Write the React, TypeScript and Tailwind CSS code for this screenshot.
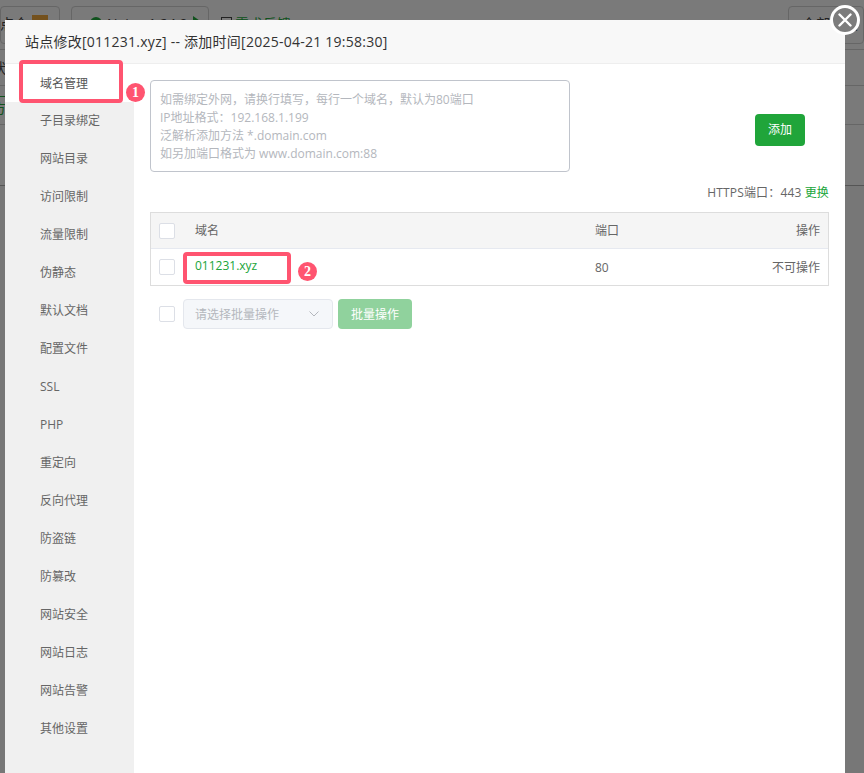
import React from "react";

const font = '"Open Sans", "Noto Sans CJK SC", sans-serif';
const menu = ["域名管理","子目录绑定","网站目录","访问限制","流量限制","伪静态","默认文档","配置文件","SSL","PHP","重定向","反向代理","防盗链","防篡改","网站安全","网站日志","网站告警","其他设置"];

function Check() {
  return <span className="block w-4 h-4 shrink-0 rounded-[2px] border border-[#dcdfe6] bg-white" />;
}

function Badge({ n }: { n: string }) {
  return (
    <span className="absolute w-[19px] h-[19px] rounded-full bg-[#ff5470] text-white text-[14px] font-bold flex items-center justify-center [font-family:'Liberation_Serif',serif]">
      {n}
    </span>
  );
}

function Background() {
  return (
    <div className="h-full bg-[#f4f4f4] text-[#444] text-[14px]">
      <div className="flex items-center h-[50px] border-b border-[#ccc] pt-[6px] pb-[6px]">
        <div className="flex items-center justify-end w-[60px] h-[38px] border border-[#ccc] rounded-[4px] pr-[11px] pb-[3px] gap-1 overflow-hidden shrink-0">
          <span className="whitespace-nowrap">站点合</span>
          <span className="w-4 h-4 bg-[#e8a33a] shrink-0" />
        </div>
        <div className="flex items-center ml-[11px] w-[138px] h-[38px] border border-[#ccc] rounded-[4px] pl-[18px] pb-[3px] gap-[5px] shrink-0">
          <span className="w-3 h-3 rounded-full bg-[#20a53a]" />
          <span className="whitespace-nowrap">Nginx 1.24.0</span>
          <span className="w-0 h-0 border-y-[7px] border-y-transparent border-l-[10px] border-l-[#20a53a]" />
        </div>
        <span className="ml-3 pb-[3px] flex items-center gap-[3px] whitespace-nowrap">
          <span className="w-[11px] h-[12px] border border-[#444]" />
          <span className="text-[#20a53a]">需求反馈</span>
        </span>
        <div className="ml-auto w-[76px] h-[38px] border border-[#ccc] rounded-[4px] pl-[13px] pb-[3px] flex items-center whitespace-nowrap overflow-hidden">全部分类</div>
      </div>
      <div className="h-[36px] border-b border-[#ccc] flex items-center"><span className="-ml-2">状态</span></div>
      <div className="h-[39px] border-b border-[#ccc] flex items-center text-[#20a53a]"><span className="-ml-2 border-t border-[#20a53a] w-5 mt-1 pt-0">方</span></div>
      <div className="h-[61px] border-b border-[#aaa]" />
      <div className="h-full bg-[#eee]" />
    </div>
  );
}

export default function App() {
  return (
    <div className="relative w-[864px] h-[773px] overflow-hidden" style={{ fontFamily: font }}>
      <Background />
      <div className="absolute inset-0 bg-black/50" />

      <div className="absolute left-[5px] top-[20px] w-[840px] h-[760px] bg-white flex flex-col text-[12px] text-[#666]">
        <div className="h-[44px] shrink-0 bg-[#f8f8f8] border-b border-[#eee] pl-5 flex items-center text-[14px] tracking-[0.25px] text-[#333]">
          站点修改[011231.xyz] -- 添加时间[2025-04-21 19:58:30]
        </div>
        <div className="flex flex-1 min-h-0">
          <div className="w-[129px] shrink-0 bg-[#f0f0f0]">
            {menu.map((m, i) => (
              <div key={m} className={`h-[38px] pl-[35px] flex items-center ${i === 0 ? "bg-white text-[#555] pt-[1px]" : ""}`}>{m}</div>
            ))}
          </div>
          <div className="flex-1 pl-4 pr-4 pt-4">
            <div className="flex items-start">
              <div className="w-[420px] h-[92px] rounded-[4px] border border-[#c0c4cc] px-[9px] pt-[10px] text-[#b4b7bd] leading-[18px]">
                <div>如需绑定外网，请换行填写，每行一个域名，默认为80端口</div>
                <div>IP地址格式：192.168.1.199</div>
                <div>泛解析添加方法 *.domain.com</div>
                <div>如另加端口格式为 www.domain.com:88</div>
              </div>
              <button className="ml-[185px] mt-[34px] w-[50px] h-[32px] rounded-[4px] bg-[#20a53a] text-white text-[12px]">添加</button>
            </div>
            <div className="h-[40px] flex items-center justify-end pt-[1px] text-[#666] tracking-[0.15px]">
              HTTPS端口：443&nbsp;<span className="text-[#20a53a]">更换</span>
            </div>
            <div className="border border-[#ddd]">
              <div className="h-[36px] bg-[#f5f5f5] border-b border-[#e6e9f0] flex items-center pl-2 pr-2">
                <Check />
                <span className="ml-5">域名</span>
                <span className="ml-[376px]">端口</span>
                <span className="ml-auto">操作</span>
              </div>
              <div className="h-[36px] flex items-center pl-2 pr-2">
                <Check />
                <span className="ml-5 -mt-[2px] text-[#20a53a] font-medium w-[400px]">011231.xyz</span>
                <span className="pt-[1px]">80</span>
                <span className="ml-auto pt-[1px]">不可操作</span>
              </div>
            </div>
            <div className="flex items-center mt-[13px] pl-[9px]">
              <Check />
              <div className="ml-2 w-[150px] h-[30px] rounded-[4px] border border-[#e4e7ed] bg-[#f5f7fa] pl-[11px] pr-[13px] flex items-center justify-between text-[#b4b7bd]">
                <span className="pt-[1px]">请选择批量操作</span>
                <svg width="10" height="6" viewBox="0 0 10 6" fill="none" stroke="#b4b7bd" strokeWidth="1">
                  <path d="M0.5 0.5L5 5L9.5 0.5" />
                </svg>
              </div>
              <div className="ml-[5px] w-[74px] h-[30px] rounded-[4px] bg-[#90d29d] text-white flex items-center justify-center pt-[1px]">批量操作</div>
            </div>
          </div>
        </div>
      </div>

      <div className="absolute left-[19px] top-[60px] w-[104px] h-[43px] rounded-[4px] border-[4px] border-[#ff5470]" />
      <div className="absolute left-[183px] top-[252px] w-[108px] h-[32px] rounded-[4px] border-[4px] border-[#ff5470]" />
      <div className="absolute left-[126px] top-[83px]"><Badge n="1" /></div>
      <div className="absolute left-[298px] top-[262px]"><Badge n="2" /></div>

      <div className="absolute left-[830px] top-[5px] w-[30px] h-[30px] rounded-full border-[3px] border-white bg-[#7c7c7c] flex items-center justify-center">
        <svg width="14" height="14" viewBox="0 0 14 14" fill="none" stroke="white" strokeWidth="2.4" strokeLinecap="round">
          <path d="M1.5 1.5L12.5 12.5M12.5 1.5L1.5 12.5" />
        </svg>
      </div>
    </div>
  );
}
